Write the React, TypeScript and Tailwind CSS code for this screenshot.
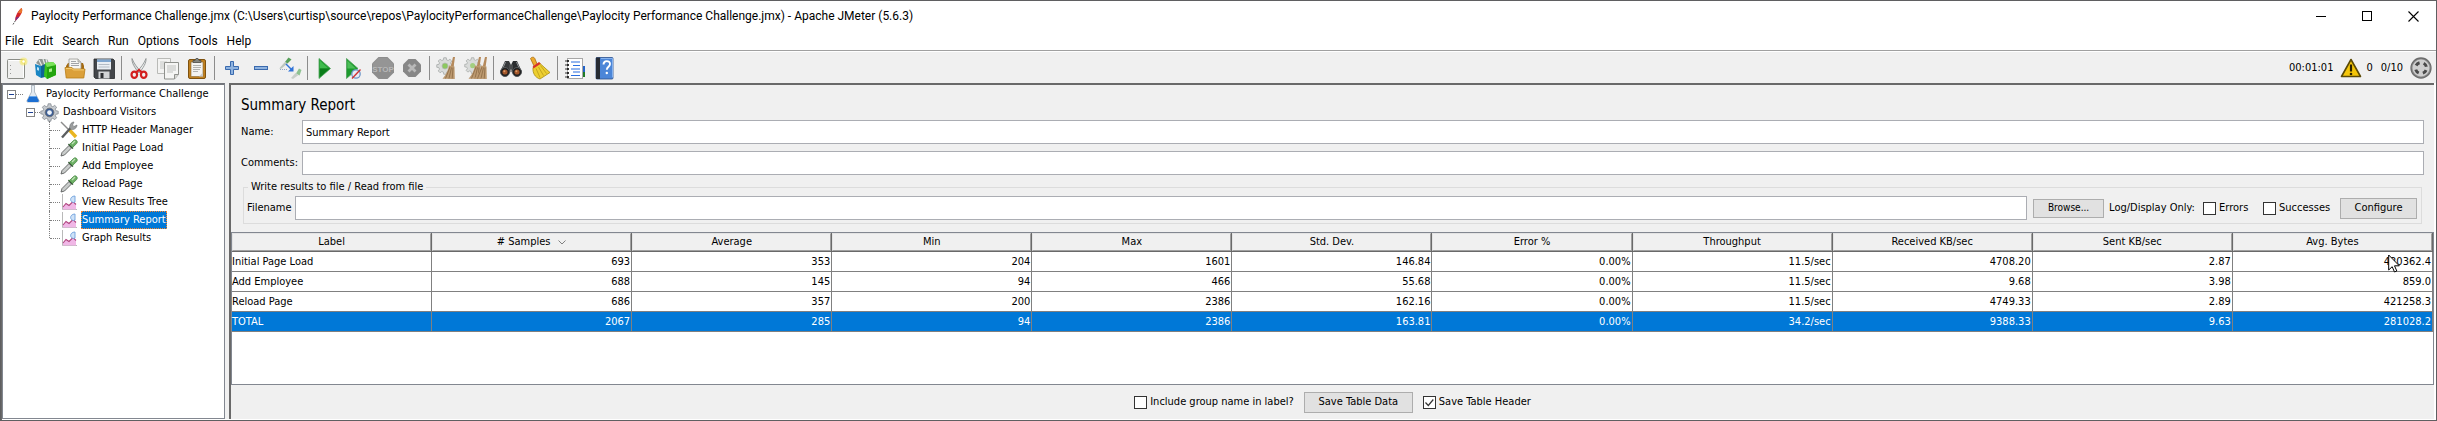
import type { ReactNode } from "react";

/* ---------- toolbar icons ---------- */

function NewIcon() {
  return (
    <svg viewBox="0 0 24 24" className="size-6">
      <rect x="2.5" y="3.5" width="17" height="19" rx="1" fill="#efefee" stroke="#8b8d88" />
      <path d="M3.5 4.5h15v17" fill="none" stroke="#fff" />
      <path d="M5.5 9v1M5.5 13v1M5.5 17v1" stroke="#999" />
      <circle cx="18.500" cy="5.500" r="4" fill="#f6e84e" opacity=".5" />
      <circle cx="18.500" cy="5.500" r="2.300" fill="#f4e66a" />
      <circle cx="18.500" cy="5.500" r="1.200" fill="#fff" />
    </svg>
  );
}

function TemplatesIcon() {
  return (
    <svg viewBox="0 0 24 24" className="size-6">
      <path d="M2 7l3-4h8l2 4-5 5z" fill="#8f9692" />
      <path d="M5 4l3 6M9 3l2 6M12 3l1 4" stroke="#e8ecea" strokeWidth="1.2" />
      <path d="M1 8l6 2v12l-5-3z" fill="#1a86c4" />
      <path d="M7 10l4-2v13l-4 1z" fill="#0f6396" />
      <path d="M3 11l2 .8v3L3 14z" fill="#bfe2f4" />
      <path d="M11 7l8-1 3 3v10l-9 4-3-3z" fill="#37c21c" />
      <path d="M13 11l9-2v10l-9 4z" fill="#23a40f" />
      <path d="M15 13l3-.8v3.3l-3 .8z" fill="#a9f08f" />
      <path d="M11 7l8-1 3 3-9 2z" fill="#7be35b" />
    </svg>
  );
}

function OpenIcon() {
  return (
    <svg viewBox="0 0 24 24" className="size-6">
      <path d="M3 10l2-3h15l1 3v11H3z" fill="#a56a10" />
      <path d="M6 3h9l3 3v9H6z" fill="#f6f6f4" stroke="#9a9a96" strokeWidth=".8" />
      <path d="M15 3v3h3" fill="#d5d5d2" stroke="#9a9a96" strokeWidth=".8" />
      <path d="M8 5.5h5M8 7.5h8M8 9.5h8" stroke="#8b8f94" strokeWidth=".8" />
      <path d="M2 11.5h7l1.5 1.5H22l-1.2 9H3.2z" fill="#dba03a" stroke="#b97d17" strokeWidth=".8" />
      <path d="M3 12.4h5.8l1.5 1.5H21" fill="none" stroke="#f6cf77" />
    </svg>
  );
}

function SaveIcon() {
  return (
    <svg viewBox="0 0 24 24" className="size-6">
      <path d="M2 3h19l1.5 1.5V22.500H3.500L2 21z" fill="#43464a" stroke="#26282b" strokeWidth=".8" />
      <rect x="5" y="3.500" width="14" height="10" fill="#e9eef3" />
      <rect x="5" y="3.500" width="14" height="2.500" fill="#7fa6cf" />
      <path d="M6.500 8.500h11M6.500 11h11" stroke="#b4bcc5" />
      <rect x="6.500" y="15.500" width="11" height="7" fill="#d2d4d6" />
      <rect x="8.500" y="17" width="3" height="5" fill="#2d2f32" />
    </svg>
  );
}

function CutIcon() {
  return (
    <svg viewBox="0 0 24 24" className="size-6">
      <path d="M5 2.500c2 5 5 9 9 13l-2.500 1C8 12 4.500 7 5 2.500z" fill="#d9dcdc" stroke="#858a8a" strokeWidth=".8" />
      <path d="M19 2.500c-2 5-5 9-9 13l2.500 1C16 12 19.500 7 19 2.500z" fill="#eceeee" stroke="#858a8a" strokeWidth=".8" />
      <ellipse cx="7.300" cy="18.800" rx="2.800" ry="3.100" fill="none" stroke="#d31f1f" strokeWidth="2.200" />
      <ellipse cx="16.700" cy="18.800" rx="2.800" ry="3.100" fill="none" stroke="#d31f1f" strokeWidth="2.200" />
      <path d="M9 16.500l3-2.500 3 2.500" fill="none" stroke="#d31f1f" strokeWidth="2.200" />
    </svg>
  );
}

function CopyIcon() {
  return (
    <svg viewBox="0 0 24 24" className="size-6">
      <path d="M1.500 2.500h13v15h-13z" fill="#f3f3f2" stroke="#b9bab7" />
      <path d="M4 6h7M4 8h7M4 10h4M4 12h4" stroke="#c6c8c6" />
      <path d="M8.500 6.500h14v12l-4 4.500h-10z" fill="#f5f5f4" stroke="#8f918d" />
      <path d="M22.500 18.500h-4v4.500" fill="#d8d8d5" stroke="#8f918d" />
      <path d="M11 10h9M11 12h9M11 14h9M11 16h6" stroke="#bfc1bf" />
    </svg>
  );
}

function PasteIcon() {
  return (
    <svg viewBox="0 0 24 24" className="size-6">
      <rect x="3.500" y="3.500" width="17" height="19" rx="1.500" fill="#c08020" stroke="#7e5210" />
      <rect x="6" y="6" width="12" height="14.500" fill="#f3f3f1" stroke="#8a6a34" strokeWidth=".6" />
      <path d="M8 9.500h8M8 11.500h8M8 13.500h7M8 15.500h5" stroke="#a9aaa8" strokeWidth=".9" />
      <path d="M18 16.500l-4 4h4z" fill="#c9c9c6" />
      <path d="M8 6.500V4.500h2l1-2h2l1 2h2v2z" fill="#83857f" stroke="#4b4d49" strokeWidth=".8" />
    </svg>
  );
}

function PlusIcon() {
  return (
    <svg viewBox="0 0 24 24" className="size-6">
      <path d="M10.500 5.500h3v5h5v3h-5v5h-3v-5h-5v-3h5z" fill="#8fb3df" stroke="#3a6aae" />
    </svg>
  );
}

function MinusIcon() {
  return (
    <svg viewBox="0 0 24 24" className="size-6">
      <rect x="5.500" y="10.500" width="13" height="3" fill="#8fb3df" stroke="#3a6aae" />
    </svg>
  );
}

function ToggleIcon() {
  return (
    <svg viewBox="0 0 24 24" className="size-6">
      <path d="M10.500 1.500l3 2-4 4-2.500-1.500z" fill="#57a05a" />
      <path d="M7 6l2.500 1.500-6 5-2 .5.500-1.500z" fill="#bcc7be" />
      <path d="M8 8l5.500 5.500" stroke="#2f73d8" strokeWidth="1.400" />
      <path d="M15.500 10v5.500H10z" fill="#2f73d8" />
      <path d="M2 13.500h8" stroke="#8fa6c9" strokeDasharray="1 1" />
      <g opacity=".65">
        <path d="M21 12.500l2.500 1.500-2 5.500-3.500-2z" fill="#5aab5f" />
        <path d="M17.500 17l3 2-5.500 4-2-1z" fill="#b4bcb5" />
      </g>
    </svg>
  );
}

function StartIcon() {
  return (
    <svg viewBox="0 0 24 24" className="size-6">
      <path d="M6 2.500L17.500 12.500 6 22.500z" fill="#1d9a2d" stroke="#4fa15a" strokeWidth=".8" />
      <path d="M6.800 4.500l8.500 8H6.800z" fill="#3fbb4d" />
      <path d="M6.800 12.500h10l-10 8.500z" fill="#0b7d1a" />
    </svg>
  );
}

function StartNoPauseIcon() {
  return (
    <svg viewBox="0 0 24 24" className="size-6">
      <path d="M4.500 2.500L16 12.500 4.500 22.500z" fill="#1d9a2d" stroke="#4fa15a" strokeWidth=".8" />
      <path d="M5.300 4.500l8.500 8H5.300z" fill="#4cbd58" />
      <circle cx="14" cy="18" r="4.200" fill="#e8edf6" stroke="#6f97c9" strokeWidth="1.300" />
      <path d="M10 22.500l8.500-9" stroke="#cf3434" strokeWidth="1.400" />
    </svg>
  );
}

function StopIcon() {
  return (
    <svg viewBox="0 0 24 24" className="size-6">
      <path d="M7.500 1h9l6.500 6.500v9L16.500 23h-9L1 16.500v-9z" fill="#8d8d8d" />
      <path d="M7.800 2h8.400L22 7.800V12H2V7.800z" fill="#959595" />
      <text x="12" y="15.500" textAnchor="middle" fontFamily="Liberation Sans" fontSize="8" fontWeight="700" fill="#b8b8b8">STOP</text>
    </svg>
  );
}

function ShutdownIcon() {
  return (
    <svg viewBox="0 0 24 24" className="size-6">
      <path d="M8.500 3h7l5.500 5.500v7L15.500 21h-7L3 15.500v-7z" fill="#878787" />
      <path d="M8.500 8.500l7 7M15.500 8.500l-7 7" stroke="#b9b9b9" strokeWidth="2.800" />
    </svg>
  );
}

const GEAR =
  "M10.300 1h3.400l.5 2.900 2 .8 2.400-1.700 2.400 2.400-1.700 2.400.8 2 2.900.5v3.400l-2.900.5-.8 2 1.700 2.400-2.400 2.400-2.400-1.700-2 .8-.5 2.900h-3.400l-.5-2.900-2-.8-2.400 1.700L3 18.600l1.700-2.400-.8-2L1 13.700v-3.400l2.900-.5.8-2L3 5.400 5.400 3l2.400 1.700 2-.8z";

function Broom({ x }: { x: number }) {
  return (
    <g transform={`translate(${x} 0)`}>
      <path d="M18 1h2l-1.500 10.500h-3z" fill="#b58a5c" />
      <path d="M14 9.500l5.500 1 .3 12.500-12.300-.3c3.500-3.500 5.500-8.200 6.500-13.200z" fill="#bd9a70" />
      <path d="M15 11l-4.500 11.500M16.500 11.500L14 22.500M18 11.500l-.8 11" stroke="#8a6a45" strokeWidth=".8" />
    </g>
  );
}

function ClearIcon() {
  return (
    <svg viewBox="0 0 24 24" className="size-6">
      <g transform="translate(1 1) scale(.75)">
        <path d={GEAR} fill="#d9dbda" stroke="#a3a7a5" />
        <circle cx="12" cy="12" r="4" fill="#8cc860" stroke="#b4b8b5" />
      </g>
      <Broom x={0} />
    </svg>
  );
}

function ClearAllIcon() {
  return (
    <svg viewBox="0 0 24 24" className="size-6">
      <g transform="translate(0 1) scale(.72)">
        <path d={GEAR} fill="#d9dbda" stroke="#a3a7a5" />
        <circle cx="12" cy="12" r="3.500" fill="#a3cf80" />
      </g>
      <Broom x={-3} />
      <Broom x={3} />
    </svg>
  );
}

function SearchIcon() {
  return (
    <svg viewBox="0 0 24 24" className="size-6">
      <path d="M6 5h4l1.500 3v8L7 19 1 16z" fill="#37393b" />
      <path d="M18 5h-4l-1.500 3v8l4.500 3 6-3z" fill="#2b2d2f" />
      <rect x="10" y="8.500" width="4" height="5" fill="#4a4c4e" />
      <path d="M6.500 6l-3 7M17.500 6l3 7" stroke="#8e9295" />
      <circle cx="6" cy="16" r="4.500" fill="#1c1d1e" stroke="#55585a" />
      <circle cx="18" cy="16" r="4.500" fill="#1c1d1e" stroke="#55585a" />
      <circle cx="6" cy="16" r="2.600" fill="#a2562a" />
      <circle cx="18" cy="16" r="2.600" fill="#a2562a" />
      <circle cx="5.400" cy="15.300" r="1" fill="#dc9a68" />
      <circle cx="17.400" cy="15.300" r="1" fill="#dc9a68" />
    </svg>
  );
}

function SearchResetIcon() {
  return (
    <svg viewBox="0 0 24 24" className="size-6">
      <path d="M2.500 2.500c1.500-2 4-1.500 4.500.5l2.500 6-3 2z" fill="#eda92c" stroke="#a86d10" strokeWidth=".8" />
      <path d="M5 11.500l6.500-4.500 10.500 9.500-10 6.500C7 21.500 4.500 17 5 11.500z" fill="#edcf30" stroke="#a88d13" strokeWidth=".8" />
      <path d="M4.700 10.500L11 6l1.700 1.800-7.200 4.700z" fill="#d8332a" />
      <path d="M8 12.500l4 9M10.500 11l5 8.500M12.500 9.500l6 8" stroke="#b99a19" strokeWidth=".8" />
    </svg>
  );
}

function FunctionIcon() {
  return (
    <svg viewBox="0 0 24 24" className="size-6">
      <rect x="18" y="10" width="4" height="6" fill="#2263c9" />
      <rect x="18" y="16" width="4" height="5" fill="#1f7a25" />
      <rect x="4.500" y="2.500" width="15" height="20" fill="#fff" stroke="#a7a7a7" />
      <path d="M8 6h9M10 9.500h7M8 13h9M10 16h7M8 19.500h9" stroke="#2a6fe0" strokeWidth="1.200" />
      <path d="M2 5h4M2 9h4M2 13h4M2 17h4M2 21h4" stroke="#333" strokeWidth="1.200" />
      <path d="M5 4v2M5 8v2M5 12v2M5 16v2M5 20v2" stroke="#111" strokeWidth="1.500" />
    </svg>
  );
}

function HelpIcon() {
  return (
    <svg viewBox="0 0 24 24" className="size-6">
      <rect x="4" y="1.500" width="17" height="21.500" rx="1" fill="#4c86d8" stroke="#2d528e" strokeWidth=".8" />
      <rect x="4" y="1.500" width="4" height="21.500" fill="#262b33" />
      <path d="M9 2.500h11.500v19" fill="none" stroke="#87b3ee" />
      <path d="M11.500 8.500c0-4.500 6.500-4.300 6.500-.5 0 2.700-3.200 2.700-3.200 5.800" fill="none" stroke="#fff" strokeWidth="1.900" />
      <circle cx="14.800" cy="17" r="1.200" fill="#fff" />
    </svg>
  );
}

/* ---------- tree icons ---------- */

function FlaskIcon() {
  return (
    <svg viewBox="0 0 18 18" className="size-[18px]">
      <path d="M7 .5h4M7.500 1v6L3 15.500c-.5 1 0 1.500 1 1.500h10c1 0 1.500-.5 1-1.500L10.500 7V1" fill="#e3eaf1" stroke="#a3adb8" strokeWidth=".8" />
      <path d="M5.600 11h6.800l2.600 5-1 1H4l-1-1z" fill="#1c6fd2" />
      <path d="M5.600 11h6.800l.5 1H5z" fill="#68a8ee" />
    </svg>
  );
}

function GearIcon() {
  return (
    <svg viewBox="0 0 24 24" className="size-[19px] shrink-0">
      <path d={GEAR} fill="#c6cacf" stroke="#83898f" />
      <circle cx="12" cy="12" r="5.500" fill="#3b5d94" stroke="#6a7077" strokeWidth="1.200" />
      <circle cx="12" cy="12" r="3" fill="#eef4fb" />
    </svg>
  );
}

function ToolsIcon() {
  return (
    <svg viewBox="0 0 18 18" className="size-[18px]">
      <path d="M1 1l8 8" stroke="#8c8c8c" strokeWidth="1.500" />
      <path d="M9.500 9l6.500 7" stroke="#e9b520" strokeWidth="3.400" />
      <path d="M2 16.500l9-10" stroke="#5b5e60" strokeWidth="2.400" />
      <path d="M10 7.500c-1-3 1-6.500 4-6.500l-1.500 3 1.500 1.500L17 4c0 3-3 5-5.500 4.500z" fill="#9b9e9f" stroke="#6b6e70" strokeWidth=".6" />
    </svg>
  );
}

function PipetteIcon() {
  return (
    <svg viewBox="0 0 18 18" className="size-[18px]">
      <path d="M1 17l1-3.500L9 6.500 11.500 9 4.500 16z" fill="#c9cccb" stroke="#5b5e5e" strokeWidth=".9" />
      <path d="M8.500 5l4.500 4.500" stroke="#2c4a2c" strokeWidth="1.500" />
      <path d="M9.500 5.500L13.500 1.500c2-2 5 .8 3.200 3L12.500 8.500z" fill="#6db065" stroke="#4c8a47" strokeWidth=".8" />
      <path d="M12 5l3-3" stroke="#c0e3b8" strokeWidth="1.200" />
    </svg>
  );
}

function ResultsIcon() {
  return (
    <svg viewBox="0 0 18 18" className="size-[18px]">
      <path d="M2.500 1v15.500H17" fill="none" stroke="#b9b9b9" />
      <path d="M3 14l3-3.500 3 2 4-4 3 3v5H3z" fill="#f0b7e6" />
      <path d="M3 14l3-3.500 3 2L13 8.500l3 3" fill="none" stroke="#b0447f" strokeWidth="1.100" />
      <path d="M15 3c-5 0-6 5.500-1.500 6.500L15 9z" fill="#cfe2f7" stroke="#6ea0dc" strokeWidth=".9" />
    </svg>
  );
}

/* ---------- data ---------- */

const MENUS = ["File", "Edit", "Search", "Run", "Options", "Tools", "Help"];

const TOOL_GROUPS: { label: string; icon: ReactNode }[][] = [
  [
    { label: "New", icon: <NewIcon /> },
    { label: "Templates", icon: <TemplatesIcon /> },
    { label: "Open", icon: <OpenIcon /> },
    { label: "Save", icon: <SaveIcon /> },
  ],
  [
    { label: "Cut", icon: <CutIcon /> },
    { label: "Copy", icon: <CopyIcon /> },
    { label: "Paste", icon: <PasteIcon /> },
  ],
  [
    { label: "Expand All", icon: <PlusIcon /> },
    { label: "Collapse All", icon: <MinusIcon /> },
    { label: "Toggle", icon: <ToggleIcon /> },
  ],
  [
    { label: "Start", icon: <StartIcon /> },
    { label: "Start no pauses", icon: <StartNoPauseIcon /> },
    { label: "Stop", icon: <StopIcon /> },
    { label: "Shutdown", icon: <ShutdownIcon /> },
  ],
  [
    { label: "Clear", icon: <ClearIcon /> },
    { label: "Clear All", icon: <ClearAllIcon /> },
  ],
  [
    { label: "Search tree", icon: <SearchIcon /> },
    { label: "Reset Search", icon: <SearchResetIcon /> },
  ],
  [
    { label: "Function Helper", icon: <FunctionIcon /> },
    { label: "Help contents", icon: <HelpIcon /> },
  ],
];

const TREE_LEAVES: { label: string; icon: ReactNode; selected?: boolean }[] = [
  { label: "HTTP Header Manager", icon: <ToolsIcon /> },
  { label: "Initial Page Load", icon: <PipetteIcon /> },
  { label: "Add Employee", icon: <PipetteIcon /> },
  { label: "Reload Page", icon: <PipetteIcon /> },
  { label: "View Results Tree", icon: <ResultsIcon /> },
  { label: "Summary Report", icon: <ResultsIcon />, selected: true },
  { label: "Graph Results", icon: <ResultsIcon /> },
];

const COLUMNS = [
  "Label", "# Samples", "Average", "Min", "Max", "Std. Dev.", "Error %",
  "Throughput", "Received KB/sec", "Sent KB/sec", "Avg. Bytes",
];

const ROWS = [
  ["Initial Page Load", "693", "353", "204", "1601", "146.84", "0.00%", "11.5/sec", "4708.20", "2.87", "420362.4"],
  ["Add Employee", "688", "145", "94", "466", "55.68", "0.00%", "11.5/sec", "9.68", "3.98", "859.0"],
  ["Reload Page", "686", "357", "200", "2386", "162.16", "0.00%", "11.5/sec", "4749.33", "2.89", "421258.3"],
  ["TOTAL", "2067", "285", "94", "2386", "163.81", "0.00%", "34.2/sec", "9388.33", "9.63", "281028.2"],
];

/* ---------- small parts ---------- */

function Expander() {
  return (
    <button aria-label="Collapse" className="flex size-[9px] shrink-0 items-center justify-center border border-[#848484] bg-white">
      <span className="h-px w-[5px] bg-[#1c3f94]" />
    </button>
  );
}

function CheckBox({ label, checked }: { label: string; checked?: boolean }) {
  return (
    <label className="flex items-center gap-[3px] whitespace-nowrap">
      <span className="grid">
        <input
          type="checkbox"
          defaultChecked={checked}
          className="peer col-start-1 row-start-1 size-[13px] appearance-none border border-[#333] bg-white"
        />
        <svg viewBox="0 0 13 13" className="pointer-events-none col-start-1 row-start-1 hidden size-[13px] peer-checked:block">
          <path d="M2.500 6.500l2.800 3 5-6" fill="none" stroke="#333" strokeWidth="1.200" />
        </svg>
      </span>
      {label}
    </label>
  );
}

function TitleBar() {
  return (
    <header className="flex h-[30px] items-center pl-[9px] pr-[17px]">
      <svg viewBox="0 0 14 18" className="mr-[7px] h-[18px] w-[14px]">
        <path d="M11.500 1c1.500 2 .5 5-2 8.500L5.500 14c-.8-2 0-4.500 1.500-7.500C8.300 4 10 2 11.500 1z" fill="#d3242c" />
        <path d="M11.500 1c1 1.300.9 3.200 0 5.200L8 6c.9-2 2-4 3.500-5z" fill="#e9762c" />
        <path d="M9.500 9.500L5.500 14l.3-3.500z" fill="#7b2a86" />
        <path d="M5.500 13.500L3 17.500" stroke="#555" strokeDasharray="2 1" />
      </svg>
      <h1 className="grow truncate font-[family-name:Roboto,sans-serif] text-xs">
        Paylocity Performance Challenge.jmx (C:\Users\curtisp\source\repos\PaylocityPerformanceChallenge\Paylocity Performance Challenge.jmx) - Apache JMeter (5.6.3)
      </h1>
      <div className="flex items-center gap-[35px]">
        <button aria-label="Minimize">
          <svg viewBox="0 0 11 11" className="size-[11px]"><path d="M0 5.500h10" stroke="#000" /></svg>
        </button>
        <button aria-label="Maximize">
          <svg viewBox="0 0 11 11" className="size-[11px]"><rect x=".5" y=".5" width="9" height="9" fill="none" stroke="#000" /></svg>
        </button>
        <button aria-label="Close">
          <svg viewBox="0 0 11 11" className="size-[11px]"><path d="M.5.5l10 10M10.500.5l-10 10" stroke="#000" strokeWidth="1.100" /></svg>
        </button>
      </div>
    </header>
  );
}

function Toolbar() {
  return (
    <div className="flex h-[31px] items-center bg-[#f0f0f0] pr-[4px] pl-px">
      {TOOL_GROUPS.map((group, i) => (
        <div key={group[0].label} className="flex items-center">
          {i > 0 && (
            <span className="flex w-[6px] justify-center">
              <span className="h-6 w-px bg-[#8c8c8c]" />
            </span>
          )}
          {group.map((tool) => (
            <button key={tool.label} aria-label={tool.label} className="flex w-[29px] justify-center">
              {tool.icon}
            </button>
          ))}
        </div>
      ))}
      <div className="ml-auto flex items-center">
        <span>00:01:01</span>
        <svg viewBox="0 0 22 20" className="ml-[7px] mr-1 h-5 w-[22px]">
          <path d="M11 1.500L20.500 18.500h-19z" fill="#f5c60a" stroke="#5b4a06" strokeWidth="1.600" strokeLinejoin="round" />
          <path d="M11 6.500v7" stroke="#2b2300" strokeWidth="2.200" />
          <circle cx="11" cy="16" r="1.300" fill="#2b2300" />
        </svg>
        <span className="mr-2">0</span>
        <span className="mr-[7px]">0/10</span>
        <svg viewBox="0 0 22 22" className="size-[22px]">
          <circle cx="11" cy="11" r="10" fill="#8f8f8f" stroke="#6c6c6c" strokeWidth="1.300" />
          <circle cx="11" cy="11" r="8.500" fill="#cfcfcf" />
          <circle cx="11" cy="11" r="5.500" fill="none" stroke="#4a4a4a" strokeWidth="3" strokeDasharray="4.320 4.320" strokeDashoffset="-2.160" />
        </svg>
      </div>
    </div>
  );
}

function Tree() {
  return (
    <nav className="w-[223px] shrink-0 border border-t-2 border-[#828790] border-t-[#73767c] bg-white pl-[4px]">
      <div className="flex h-[18px] items-center">
        <Expander />
        <span className="w-[7px] border-t border-dotted border-[#808080]" />
        <span className="mr-1 ml-px"><FlaskIcon /></span>
        <span>Paylocity Performance Challenge</span>
      </div>
      <div className="flex h-[18px] items-center pl-[19px]">
        <Expander />
        <span className="w-[5px] border-t border-dotted border-[#808080]" />
        <GearIcon />
        <span className="ml-1">Dashboard Visitors</span>
      </div>
      <ul className="pl-[42px]">
        {TREE_LEAVES.map((leaf) => (
          <li key={leaf.label} className="group flex h-[18px] items-center">
            <span className="h-full w-px border-l border-dotted border-[#808080] group-last:h-[9px] group-last:self-start" />
            <span className="w-[10px] border-t border-dotted border-[#808080]" />
            <span className="mr-[3px]">{leaf.icon}</span>
            {leaf.selected ? (
              <span className="flex h-[18px] items-center border border-dotted border-[#ff8728] bg-[#0078d7] text-white">{leaf.label}</span>
            ) : (
              <span className="px-px">{leaf.label}</span>
            )}
          </li>
        ))}
      </ul>
    </nav>
  );
}

function ResultsTable() {
  return (
    <div className="relative grow border border-[#828790] bg-white">
      <table className="w-full table-fixed border-separate border-spacing-0">
        <thead>
          <tr>
            {COLUMNS.map((name) => (
              <th key={name} className="h-[19px] border-r border-b border-[#696969] bg-[#f0f0f0] p-0 font-normal">
                <div className="flex h-[18px] items-center justify-center border border-t-[#e3e3e3] border-r-[#a0a0a0] border-b-[#a0a0a0] border-l-[#e3e3e3]">
                  {name}
                  {name === "# Samples" && (
                    <svg viewBox="0 0 8 5" className="ml-2 h-[5px] w-2"><path d="M.5.5L4 4 7.500.5" fill="none" stroke="#808080" /></svg>
                  )}
                </div>
              </th>
            ))}
          </tr>
        </thead>
        <tbody>
          {ROWS.map((row) => (
            <tr key={row[0]} className="last:bg-[#0078d7] last:text-white">
              {row.map((cell, i) => (
                <td key={i} className="h-5 border-r border-b border-[#808080] py-0 pr-px text-right first:text-left">
                  {cell}
                </td>
              ))}
            </tr>
          ))}
        </tbody>
      </table>
      <svg viewBox="0 0 12 19" className="pointer-events-none absolute top-[21px] right-[33px] h-[19px] w-3">
        <path d="M.7 1v15l3.500-3.300 2.300 5.300 2.300-1-2.300-5.200h4.800z" fill="#fff" stroke="#000" />
      </svg>
    </div>
  );
}

const FIELD = "h-6 min-w-0 grow border border-[#abadb3] bg-white px-[3px] outline-none";
const BUTTON = "border border-[#adadad] bg-[#e1e1e1]";

function SummaryReport() {
  return (
    <main className="flex min-w-0 grow flex-col border-t-2 border-l-2 border-[#696969] bg-[#f0f0f0]">
      <h2 className="mt-2.5 px-2.5 text-[15px] leading-5">Summary Report</h2>
      <div className="mt-[5px] flex items-center px-2.5">
        <label htmlFor="name" className="w-[61px] shrink-0">Name:</label>
        <input id="name" defaultValue="Summary Report" className={FIELD} />
      </div>
      <div className="mt-[7px] flex items-center px-2.5">
        <label htmlFor="comments" className="w-[61px] shrink-0">Comments:</label>
        <input id="comments" className={FIELD} />
      </div>
      <fieldset className="mx-3 mt-[5px] border border-[#dcdcdc] px-[3px] pb-[3px]">
        <legend className="ml-px px-[3px] leading-[14px]">Write results to file / Read from file</legend>
        <div className="mt-[2px] flex items-center">
          <label htmlFor="filename" className="w-12 shrink-0">Filename</label>
          <input id="filename" className={FIELD} />
          <button className={"ml-1.5 h-[19px] w-[71px] text-[10px] " + BUTTON}>Browse...</button>
          <span className="ml-[5px] w-[94px] whitespace-nowrap">Log/Display Only:</span>
          <div className="flex w-[60px]"><CheckBox label="Errors" /></div>
          <div className="flex w-[77px]"><CheckBox label="Successes" /></div>
          <button className={"mr-px h-[21px] w-[77px] " + BUTTON}>Configure</button>
        </div>
      </fieldset>
      <div className="mt-2 flex grow"><ResultsTable /></div>
      <footer className="flex h-[34px] items-center justify-center gap-2.5">
        <CheckBox label="Include group name in label?" />
        <button className={"h-[21px] w-[109px] " + BUTTON}>Save Table Data</button>
        <CheckBox label="Save Table Header" checked />
      </footer>
    </main>
  );
}

export default function App() {
  return (
    <div className="flex min-h-screen flex-col border border-[#5f5f61] bg-white font-['DejaVu_Sans_Condensed','DejaVu_Sans',sans-serif] text-[11px] leading-[14px] text-black">
      <TitleBar />
      <nav className="flex h-5 items-center gap-[9px] border-b border-[#a0a0a0] pl-1 font-[family-name:Roboto,sans-serif] text-xs">
        {MENUS.map((menu) => (
          <button key={menu}>{menu}</button>
        ))}
      </nav>
      <div className="pt-px">
        <Toolbar />
      </div>
      <div className="flex grow border-l border-[#696969] pr-0.5 pb-px">
        <div className="flex min-w-0 grow gap-1 bg-[#f0f0f0]">
          <Tree />
          <SummaryReport />
        </div>
      </div>
    </div>
  );
}
